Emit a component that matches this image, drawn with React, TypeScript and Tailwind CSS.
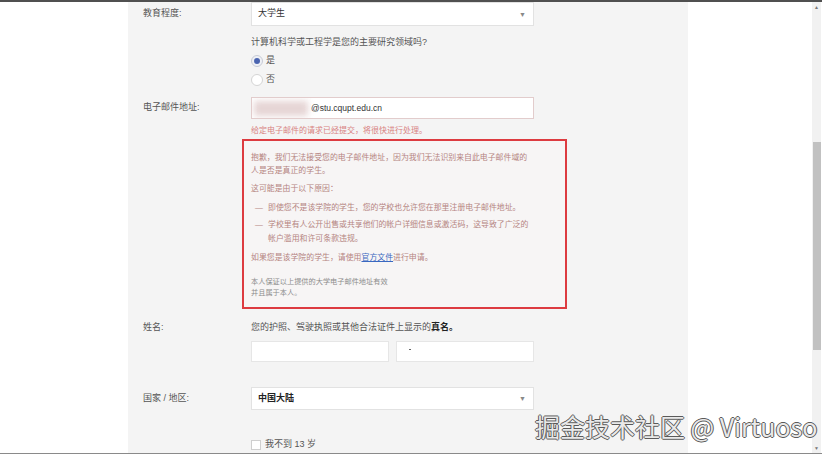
import React from "react";

const Caret = () => (
  <span className="text-[7px] text-[#888] leading-none">▼</span>
);

export default function App() {
  return (
    <div
      className="relative w-[836px] h-[460px] bg-white overflow-hidden text-[9px] text-[#555]"
      style={{ fontFamily: '"Liberation Sans", "Noto Sans CJK SC", sans-serif' }}
    >
      <div className="w-[822px] h-[2px] bg-[#505050]" />
      <div className="flex h-[451px]">
        <div className="w-[128px] bg-white" />
        <div className="w-[560px] bg-[#f4f4f4] pl-[15px] overflow-hidden">
          {/* 教育程度 */}
          <div className="flex items-center h-[24px]">
            <div className="w-[108px]">教育程度:</div>
            <div className="w-[283px] h-[24px] bg-white border border-[#e2e2e2] flex items-center justify-between pl-[6px] pr-[7px] text-[#333]">
              <span>大学生</span>
              <Caret />
            </div>
          </div>
          <div className="flex">
            <div className="w-[108px]" />
            <div className="w-[283px]">
              <div className="mt-[9px] leading-[14px]">计算机科学或工程学是您的主要研究领域吗?</div>
              <div className="mt-[4px] h-[16px] flex items-center gap-[3px]">
                <span className="w-[12px] h-[12px] rounded-full border border-[#c8cbd6] bg-[#eef0f5] flex items-center justify-center">
                  <span className="w-[6px] h-[6px] rounded-full bg-[#4a64b0]" />
                </span>
                <span>是</span>
              </div>
              <div className="mt-[3px] h-[16px] flex items-center gap-[3px]">
                <span className="w-[12px] h-[12px] rounded-full border border-[#d4d4d4] bg-white" />
                <span>否</span>
              </div>
            </div>
          </div>
          {/* 电子邮件 */}
          <div className="flex items-center mt-[9px]">
            <div className="w-[108px]">电子邮件地址:</div>
            <div className="relative w-[283px] h-[22px] bg-white border border-[#e2cccc] flex items-center overflow-hidden">
              <div className="absolute left-[2px] top-[3px] w-[54px] h-[15px] bg-[#e6d5d5] blur-[3px]" />
              <span className="ml-[59px] text-[8.5px] text-[#333] relative">@stu.cqupt.edu.cn</span>
            </div>
          </div>
          <div className="flex">
            <div className="w-[108px]" />
            <div className="w-[283px]">
              <div className="mt-[6px] leading-[12px] text-[8px] text-[#d88282]">
                给定电子邮件的请求已经提交，将很快进行处理。
              </div>
            </div>
          </div>
          {/* Warning box */}
          <div className="flex mt-[2px]">
            <div className="w-[99px]" />
            <div className="w-[325px] h-[170px] border-2 border-[#dd3b40] bg-[#f7f5f5] pl-[7px] pt-[10px] text-[7.9px] text-[#b58481]">
              <div className="leading-[13px]">
                抱歉，我们无法接受您的电子邮件地址，因为我们无法识别来自此电子邮件域的
                <br />
                人是否是真正的学生。
              </div>
              <div className="mt-[5px] leading-[13px]">这可能是由于以下原因：</div>
              <div className="mt-[6px] leading-[13px] flex">
                <span className="w-[17px] pl-[4px]">—</span>
                <span>即使您不是该学院的学生，您的学校也允许您在那里注册电子邮件地址。</span>
              </div>
              <div className="mt-[4px] leading-[14px] flex">
                <span className="w-[17px] pl-[4px] shrink-0">—</span>
                <span>
                  学校里有人公开出售或共享他们的帐户详细信息或激活码，这导致了广泛的
                  <br />
                  帐户滥用和许可条款违规。
                </span>
              </div>
              <div className="mt-[5px] leading-[13px]">
                如果您是该学院的学生，请使用
                <span className="text-[#3a68c0] underline">官方文件</span>
                进行申请。
              </div>
              <div className="mt-[13px] leading-[10.5px] text-[7.2px] text-[#8c8c8c]">
                本人保证以上提供的大学电子邮件地址有效
                <br />
                并且属于本人。
              </div>
            </div>
          </div>
          {/* 姓名 */}
          <div className="flex items-center mt-[11px] leading-[14px]">
            <div className="w-[108px]">姓名:</div>
            <div className="w-[283px]">
              您的护照、驾驶执照或其他合法证件上显示的
              <b className="text-[#222]">真名。</b>
            </div>
          </div>
          <div className="flex mt-[7px]">
            <div className="w-[108px]" />
            <div className="w-[283px] flex gap-[7px]">
              <div className="w-[138px] h-[21px] bg-white border border-[#e6e6e6]" />
              <div className="relative w-[138px] h-[21px] bg-white border border-[#e6e6e6]">
                <div className="absolute left-[12px] top-[7px] w-[2px] h-[1px] bg-[#666]" />
              </div>
            </div>
          </div>
          {/* 国家 */}
          <div className="flex items-center mt-[25px]">
            <div className="w-[108px]">国家 / 地区:</div>
            <div className="w-[283px] h-[23px] bg-white border border-[#e2e2e2] flex items-center justify-between pl-[6px] pr-[7px]">
              <span className="font-bold text-[#222]">中国大陆</span>
              <Caret />
            </div>
          </div>
          <div className="flex mt-[28px]">
            <div className="w-[108px]" />
            <div className="w-[283px] h-[14px] flex items-center gap-[4px]">
              <span className="w-[10px] h-[10px] border border-[#cfcfcf] bg-white" />
              <span>我不到 13 岁</span>
            </div>
          </div>
        </div>
        <div className="w-[124px] bg-white" />
        <div className="w-[9px] bg-[#f1f1f1] flex flex-col items-center">
          <div className="h-[10px] flex items-center text-[5px] text-[#777] leading-none">▲</div>
          <div className="mt-[130px] w-[8px] h-[208px] bg-[#c1c1c1]" />
          <div className="flex-1" />
          <div className="h-[10px] flex items-center text-[5px] text-[#777] leading-none">▼</div>
        </div>
        <div className="flex-1 bg-white" />
      </div>
      <div className="w-[822px] h-[1px] bg-[#8a8a8a]" />
      <div
        className="absolute left-[535px] top-[411px] text-[25px] leading-[30px] text-[#e9e9e9] whitespace-nowrap [text-shadow:1px_0_0_#5a5a5a,-1px_0_0_#5a5a5a,0_1px_0_#5a5a5a,0_-1px_0_#5a5a5a]"
        style={{ fontFamily: '"Noto Sans CJK SC", "Noto Sans", sans-serif' }}
      >
        掘金技术社区 @ Virtuoso
      </div>
    </div>
  );
}
